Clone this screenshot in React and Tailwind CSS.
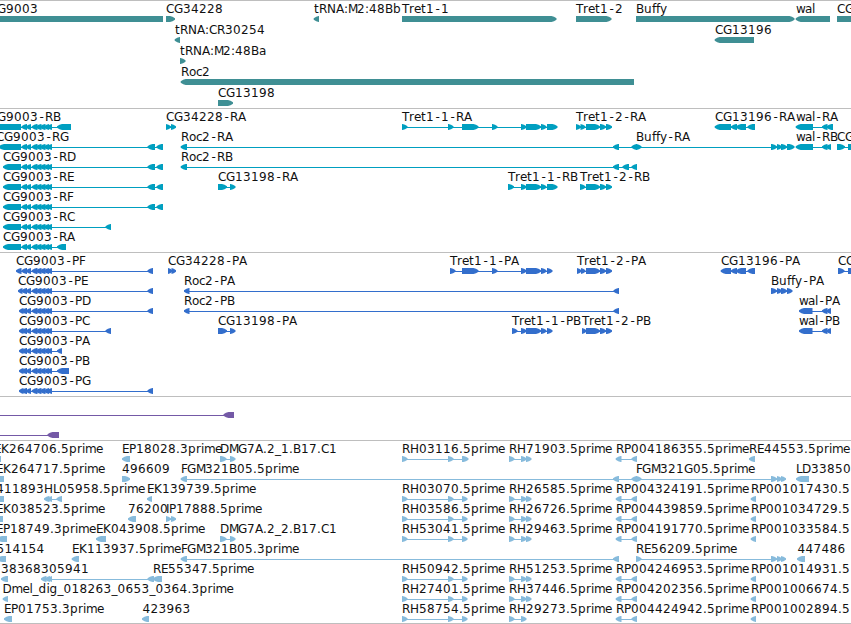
import React from "react";

const WIDTH = 851;

// exons shared by all CG9003 isoforms
const cgExons = [[21.5, 27], [26, 31], [31.7, 37.5], [36, 41.5], [40, 45.5], [44, 49], [47, 52]];
const tret11 = [[521, 526.5], [526, 541], [541, 546.5]];
const tret12 = [[586, 600], [600, 606], [606, 612]];

// feature: [label, row, strand, blocks, label x (defaults to the first block)]
const genes = [
  ["CG9003", 0, -1, [[-20, 163]], -11],
  ["CG34228", 0, 1, [[166, 175]]],
  ["tRNA:M2:48Bb", 0, -1, [[313.7, 319]]],
  ["Tret1-1", 0, 1, [[402, 556.5]]],
  ["Tret1-2", 0, 1, [[576, 611.5]]],
  ["Buffy", 0, 1, [[636, 794.5]]],
  ["wal", 0, -1, [[795.7, 830]]],
  ["CG", 0, 1, [[837, 870]]],
  ["tRNA:CR30254", 1, -1, [[174.7, 180]]],
  ["CG13196", 1, -1, [[714.7, 754]]],
  ["tRNA:M2:48Ba", 2, 1, [[180, 185.5]]],
  ["Roc2", 3, -1, [[180.7, 634]]],
  ["CG13198", 4, 1, [[218, 233]]],
];

const transcripts = [
  ["CG9003-RB", 0, -1, [[-9, 21], ...cgExons, [57, 71]], -11],
  ["CG34228-RA", 0, 1, [[166, 171], [171, 176]]],
  ["Tret1-1-RA", 0, 1, [[402, 407.5], [448, 453.5], [462, 478.5], [492, 497.5], ...tret11, [547, 557.5]]],
  ["Tret1-2-RA", 0, 1, [[576, 581], [580.5, 585.5], ...tret12]],
  ["CG13196-RA", 0, -1, [[714.7, 731], [731, 737], [736, 746], [747.5, 755]]],
  ["wal-RA", 0, -1, [[795.7, 813], [822, 827.5], [826.5, 833]]],
  ["CG9003-RG", 1, -1, [[-1, 21], ...cgExons, [147.5, 155], [156.5, 163]], -4],
  ["Roc2-RA", 1, -1, [[180.7, 187], [613, 619], [631.5, 637]]],
  ["Buffy-RA", 1, 1, [[636, 641.5], [771, 777], [777, 782], [781, 787], [787, 794.5]]],
  ["wal-RB", 1, -1, [[795.7, 813], [822, 827.5], [826, 831]]],
  ["CG", 1, 1, [[837, 845], [848, 856]]],
  ["CG9003-RD", 2, -1, [[3, 21], ...cgExons, [147.5, 155], [156.5, 163]]],
  ["Roc2-RB", 2, -1, [[180.7, 187], [613, 619], [622.5, 629], [631.5, 637]]],
  ["CG9003-RE", 3, -1, [[3, 21], ...cgExons, [147.5, 155], [156.5, 163]]],
  ["CG13198-RA", 3, 1, [[218, 227], [230, 235.5]]],
  ["Tret1-1-RB", 3, 1, [[508, 514], ...tret11, [547, 557.5]]],
  ["Tret1-2-RB", 3, 1, [[580, 585.5], ...tret12]],
  ["CG9003-RF", 4, -1, [[3, 21], ...cgExons, [147.5, 155], [156.5, 163]]],
  ["CG9003-RC", 5, -1, [[3, 21], ...cgExons, [105.5, 111]]],
  ["CG9003-RA", 6, -1, [[3, 21], ...cgExons, [57, 66]]],
];

const proteins = [
  ["CG9003-PF", 0, -1, [[16, 21.5], ...cgExons, [147.5, 153]]],
  ["CG34228-PA", 0, 1, [[168, 172.5], [171.5, 176]]],
  ["Tret1-1-PA", 0, 1, [[450, 455.5], [462, 478.5], [492, 497.5], ...tret11, [547, 552.5]]],
  ["Tret1-2-PA", 0, 1, [[577, 581.5], [581, 585.5], ...tret12]],
  ["CG13196-PA", 0, -1, [[720.7, 731], [731, 737], [736, 746], [747.5, 755]]],
  ["CG", 0, 1, [[838, 844.5], [848, 856]]],
  ["CG9003-PE", 1, -1, [[18, 22.5], ...cgExons, [147.5, 153]]],
  ["Roc2-PA", 1, -1, [[184, 189.5], [613.5, 619]]],
  ["Buffy-PA", 1, 1, [[771, 777], [777, 782], [781, 787], [787, 792.5]]],
  ["CG9003-PD", 2, -1, [[19, 23.5], ...cgExons, [147.5, 153]]],
  ["Roc2-PB", 2, -1, [[184, 189.5], [613.5, 619]]],
  ["wal-PA", 2, -1, [[799, 812.5], [822, 827.5], [826.5, 831]]],
  ["CG9003-PC", 3, -1, [[19, 23.5], ...cgExons, [105.5, 111]]],
  ["CG13198-PA", 3, 1, [[218, 227], [230, 235.5]]],
  ["Tret1-1-PB", 3, 1, [[512, 517.5], ...tret11, [547, 552.5]]],
  ["Tret1-2-PB", 3, 1, [[582, 586.5], ...tret12]],
  ["wal-PB", 3, -1, [[799, 812.5], [822, 827.5], [826.5, 831]]],
  ["CG9003-PA", 4, -1, [[19, 23.5], ...cgExons, [57, 62]]],
  ["CG9003-PB", 5, -1, [[19, 23.5], ...cgExons, [57, 69]]],
  ["CG9003-PG", 6, -1, [[19, 23.5], ...cgExons, [147.5, 153]]],
];

const noncoding = [
  ["", 0, -1, [[-20, -10], [223.5, 234]]],
  ["", 1, -1, [[-20, -10], [47.5, 59]]],
];

const rh = [[402, 407.5], [448, 453.5], [462, 467.5]];
const rh2 = [[509, 514.5], [521, 526.5], [526, 531.5]];
const rp = [[615.7, 621.5], [631.5, 637]];
const rp1 = [[750.7, 756]];

const ests = [
  ["EK264706.5prime", 0, -1, [[-5, 1]], -6],
  ["EP18028.3prime", 0, -1, [[122, 130]]],
  ["DMG7A.2_1.B17.C1", 0, 1, [[220, 226.5], [230, 235.5]]],
  ["RH03116.5prime", 0, 1, [[402, 407.5], [448, 453.5], [462, 468.5]]],
  ["RH71903.5prime", 0, 1, rh2],
  ["RP004186355.5prime", 0, -1, rp],
  ["RE44553.5prime", 0, -1, [[749, 755]]],
  ["EK264717.5prime", 1, -1, [[-5, 4]], -4],
  ["496609", 1, 1, [[122, 130]]],
  ["FGM321B05.5prime", 1, -1, [[180.7, 187], [613, 619], [631.5, 637]]],
  ["FGM321G05.5prime", 1, 1, [[636, 641.5], [771, 777], [777, 782], [781, 786]]],
  ["LD33850", 1, -1, [[796, 809]]],
  ["411893", 2, -1, [[-5, 4]], -4],
  ["HL05958.5prime", 2, -1, [[44, 49.5], [48, 52], [56.5, 62]]],
  ["EK139739.5prime", 2, -1, [[147, 152]]],
  ["RH03070.5prime", 2, 1, rh],
  ["RH26585.5prime", 2, 1, rh2],
  ["RP004324191.5prime", 2, -1, rp],
  ["RP001017430.5", 2, -1, rp1],
  ["EK038523.5prime", 3, -1, [[-5, 3]], -4],
  ["76200", 3, -1, [[128, 136]]],
  ["IP17888.5prime", 3, 1, [[166, 171], [171, 176]]],
  ["RH03586.5prime", 3, 1, rh],
  ["RH26726.5prime", 3, 1, rh2],
  ["RP004439859.5prime", 3, -1, rp],
  ["RP001034729.5", 3, -1, rp1],
  ["EP18749.3prime", 4, -1, [[-3, 7]], -4],
  ["EK043908.5prime", 4, -1, [[96, 106]]],
  ["DMG7A.2_2.B17.C1", 4, 1, [[220, 226.5], [230, 235.5]]],
  ["RH53041.5prime", 4, 1, rh],
  ["RH29463.5prime", 4, 1, rh2],
  ["RP004191770.5prime", 4, -1, rp],
  ["RP001033584.5", 4, -1, rp1],
  ["514154", 5, -1, [[-3, 6]], -3.5],
  ["EK113937.5prime", 5, -1, [[71.7, 79]]],
  ["FGM321B05.3prime", 5, -1, [[180.7, 187], [613, 619]]],
  ["RE56209.5prime", 5, 1, [[636, 641.5], [771, 777], [777, 782], [781, 786]]],
  ["447486", 5, -1, [[797, 805]], 797.5],
  ["38368", 6, -1, [[1, 8]]],
  ["305941", 6, -1, [[41, 46.5], [45, 50], [48, 52], [147.5, 154]]],
  ["RE55347.5prime", 6, -1, [[153, 162]]],
  ["RH50942.5prime", 6, 1, rh],
  ["RH51253.5prime", 6, 1, rh2],
  ["RP004246953.5prime", 6, -1, rp],
  ["RP001014931.5", 6, -1, rp1],
  ["Dmel_dig_018263_0653_0364.3prime", 7, -1, [[2.7, 8]], 2.5],
  ["RH27401.5prime", 7, 1, rh],
  ["RH37446.5prime", 7, 1, rh2],
  ["RP004202356.5prime", 7, -1, rp],
  ["RP001006674.5", 7, -1, rp1],
  ["EP01753.3prime", 8, -1, [[4, 12]]],
  ["423963", 8, -1, [[142, 149]], 142.5],
  ["RH58754.5prime", 8, 1, rh],
  ["RH29273.5prime", 8, 1, [[509, 514.5], [521, 526.5]]],
  ["RP004424942.5prime", 8, -1, rp],
  ["RP001002894.5", 8, -1, rp1],
];

const tracks = [
  { id: "genes", features: genes, pitch: 21, height: 107, color: "text-[#3f8f94]" },
  { id: "transcripts", features: transcripts, pitch: 20, height: 143, color: "text-[#009fc0]" },
  { id: "proteins", features: proteins, pitch: 20, height: 143, color: "text-[#336ecc]" },
  { id: "noncoding", features: noncoding, pitch: 20, height: 43, color: "text-[#7459a6]" },
  { id: "ests", features: ests, pitch: 20, height: 182, color: "text-[#87bbdc]" },
];

// whole-pixel glyph advances; digits and anything missing take 8
const advances = {
  A: 8, D: 9, E: 7, F: 6, G: 9, H: 9, I: 3, L: 6, M: 9, N: 9, P: 7, T: 7,
  a: 7, c: 6, e: 7, f: 4, i: 3, l: 3, m: 11, o: 7, r: 5, t: 5, w: 9, y: 7,
  ".": 4, ":": 4, "-": 7, _: 6,
};

const glyphPositions = (label, x) => {
  let pos = x;
  return [...label]
    .map((ch) => {
      // centre the hyphen in its cell
      const current = ch === "-" ? pos + 1.5 : pos;
      pos += advances[ch] ?? 8;
      return current;
    })
    .join(" ");
};

const arrow = ([a, b], strand, y) => {
  const head = Math.min(5, b - a);
  const [tip, neck, tail] = strand > 0 ? [b, b - head, a] : [a, a + head, b];
  const mid = (tip + neck) / 2;
  return [
    [tail, y], [neck, y], [mid, y + 0.7], [tip, y + 2.2],
    [tip, y + 3.8], [mid, y + 5.3], [neck, y + 6], [tail, y + 6],
  ].join(" ");
};

const Feature = ({ feature, pitch }) => {
  const [label, row, strand, blocks, labelX] = feature;
  const top = row * pitch;
  const start = blocks[0][0];
  const end = blocks[blocks.length - 1][1];

  return (
    <g>
      {blocks.length > 1 && (
        <rect x={start + 2} y={top + 18} width={end - start - 4} height="1" shapeRendering="crispEdges" />
      )}
      {blocks.map((b, i) => (
        <polygon key={i} points={arrow(b, strand, top + 15)} />
      ))}
      {label && (
        <text x={glyphPositions(label, labelX ?? Math.round(start))} y={top + 12} className="fill-[#111]">
          {label}
        </text>
      )}
    </g>
  );
};

const Track = ({ track }) => (
  <section className="border-t border-[#bebebe]">
    <svg
      width={WIDTH}
      height={track.height}
      className={`block fill-current text-[12px] ${track.color}`}
    >
      {track.features.map((f, i) => (
        <Feature key={i} feature={f} pitch={track.pitch} />
      ))}
    </svg>
  </section>
);

const App = () => {
  return (
    <main className="flex h-[624px] w-[851px] flex-col overflow-hidden border-b border-[#bebebe] bg-white font-['DejaVu_Sans',sans-serif]">
      {tracks.map((t) => (
        <Track key={t.id} track={t} />
      ))}
    </main>
  );
};

export default App;
